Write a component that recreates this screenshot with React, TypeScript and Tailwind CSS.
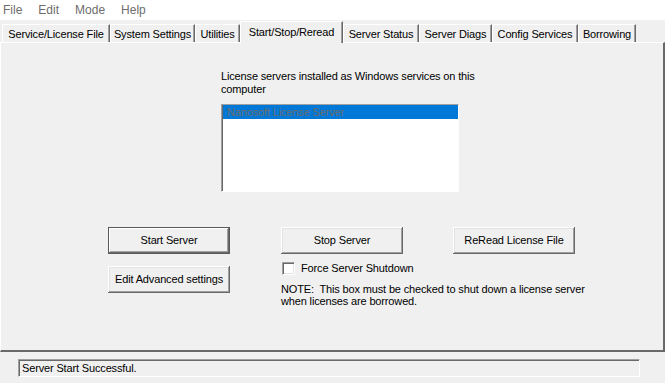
import React from 'react';

const tabs = [
  { label: 'Service/License File', w: 'w-[108px]' },
  { label: 'System Settings', w: 'w-[85px]' },
  { label: 'Utilities', w: 'w-[45px]' },
  { label: 'Start/Stop/Reread', w: 'w-[103px]', active: true },
  { label: 'Server Status', w: 'w-[76px]' },
  { label: 'Server Diags', w: 'w-[73px]' },
  { label: 'Config Services', w: 'w-[86px]' },
  { label: 'Borrowing', w: 'w-[58px]' },
];

function ClassicButton({ label, isDefault }: { label: string; isDefault?: boolean }) {
  return (
    <button
      className={`w-[122px] h-[27px] bg-[#f0f0f0] text-black text-center ${
        isDefault
          ? 'border border-[#5a5a5a] shadow-[inset_-1px_-1px_#696969,inset_1px_1px_#fff,inset_-2px_-2px_#a0a0a0]'
          : 'shadow-[inset_-1px_-1px_#696969,inset_1px_1px_#fff,inset_-2px_-2px_#a0a0a0,inset_2px_2px_#e3e3e3]'
      }`}
    >
      {label}
    </button>
  );
}

export default function App() {
  return (
    <div className="w-[665px] h-[383px] bg-[#f0f0f0] text-black text-[11px] leading-[13px] tracking-[-0.15px] font-['Liberation_Sans',Arial,sans-serif] overflow-hidden">
      {/* menu bar */}
      <div className="h-[20px] bg-white flex items-center gap-[16px] pl-[3px] text-[#6d6d6d] text-[12px] tracking-normal">
        <span>File</span>
        <span>Edit</span>
        <span>Mode</span>
        <span>Help</span>
      </div>

      {/* tab strip */}
      <div className="h-[22px] flex items-end pl-[2px]">
        {tabs.map((t) =>
          t.active ? (
            <div
              key={t.label}
              className={`${t.w} h-[22px] -mb-px relative z-10 bg-[#f0f0f0] border-t border-l border-white border-r border-r-[#696969] shadow-[inset_-1px_0_#a0a0a0] text-center pt-[4px] whitespace-nowrap`}
            >
              {t.label}
            </div>
          ) : (
            <div
              key={t.label}
              className={`${t.w} h-[18px] bg-[#f0f0f0] border-t border-l border-white border-r border-r-[#696969] shadow-[inset_-1px_0_#a0a0a0] text-center pt-[3px] whitespace-nowrap`}
            >
              {t.label}
            </div>
          )
        )}
      </div>

      {/* tab panel */}
      <div className="h-[310px] border-t border-l border-white border-r-2 border-r-[#696969] border-b-2 border-b-[#696969]">
        <div className="pl-[220px] pt-[27px]">
          <p className="whitespace-nowrap">
            License servers installed as Windows services on this
            <br />
            computer
          </p>
          <div className="mt-[8px] w-[238px] h-[88px] bg-white border-t border-l border-[#a0a0a0] border-b border-r border-b-white border-r-white shadow-[inset_1px_1px_#696969]">
            <div className="ml-px h-[14px] bg-[#0078d7] text-[#6d6d6d] pl-[4px] leading-[14px]">
              Nanosoft License Server
            </div>
          </div>
        </div>

        <div className="mt-[35px] pl-[107px] flex">
          <div className="flex flex-col gap-[12px]">
            <ClassicButton label="Start Server" isDefault />
            <ClassicButton label="Edit Advanced settings" />
          </div>
          <div className="ml-[51px] flex flex-col">
            <div className="flex gap-[50px]">
              <ClassicButton label="Stop Server" />
              <ClassicButton label="ReRead License File" />
            </div>
            <label className="mt-[8px] flex items-center gap-[6px] pl-px">
              <span className="w-[13px] h-[13px] bg-white border border-t-[#a0a0a0] border-l-[#a0a0a0] border-b-white border-r-white shadow-[inset_1px_1px_#696969,inset_-1px_-1px_#e3e3e3]" />
              <span>Force Server Shutdown</span>
            </label>
            <p className="mt-[8px] whitespace-pre leading-[12px]">
              {'NOTE:  This box must be checked to shut down a license server\nwhen licenses are borrowed.'}
            </p>
          </div>
        </div>
      </div>

      {/* status bar */}
      <div className="mt-[7px] ml-[18px] w-[622px] h-[18px] border-t border-l border-[#a0a0a0] border-b border-r border-b-white border-r-white shadow-[inset_1px_1px_#696969] pl-[3px] leading-[16px]">
        Server Start Successful.
      </div>
    </div>
  );
}
